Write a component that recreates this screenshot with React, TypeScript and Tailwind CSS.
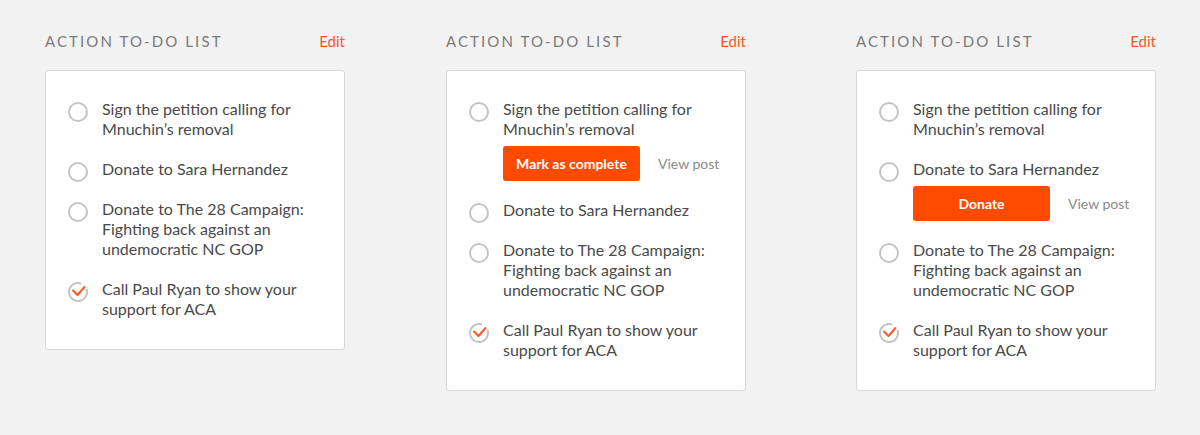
import type { ReactNode } from "react";

type Task = {
  label: ReactNode;
  done?: boolean;
};

const tasks: Task[] = [
  { label: <>Sign the petition calling for<br />Mnuchin’s removal</> },
  { label: "Donate to Sara Hernandez" },
  {
    label: (
      <>
        Donate to The 28 Campaign:
        <br />
        Fighting back against an
        <br />
        undemocratic NC GOP
      </>
    ),
  },
  { label: <>Call Paul Ryan to show your<br />support for ACA</>, done: true },
];

function Circle({ done }: { done?: boolean }) {
  if (done) {
    return (
      <svg width="20" height="20" viewBox="0 0 20 20" className="shrink-0 translate-y-[3px]">
        <path
          d="M18.46 6.92 A9 9 0 1 1 13.08 1.54"
          fill="none"
          stroke="#c4c4c4"
          strokeWidth="2"
        />
        <path
          d="M5 8.5 L9.5 13 L16.5 5"
          fill="none"
          stroke="#ff5722"
          strokeWidth="2"
          strokeLinecap="round"
          strokeLinejoin="round"
        />
      </svg>
    );
  }
  return (
    <svg width="20" height="20" viewBox="0 0 20 20" className="shrink-0 translate-y-[3px]">
      <circle cx="10" cy="10" r="9" fill="none" stroke="#c4c4c4" strokeWidth="2" />
    </svg>
  );
}

function TodoCard({ expanded }: { expanded?: { index: number; label: string } }) {
  return (
    <div className="w-[300px]">
      <div className="flex items-center justify-between h-[22px] mt-[30px]">
        <span className="text-[15px] tracking-[0.14em] text-[#7a7a7a]">ACTION TO-DO LIST</span>
        <span className="text-[15px] text-[#ff5722]">Edit</span>
      </div>
      <div className="mt-[18px] bg-white border border-[#d8d8d8] rounded-[3px] pl-[22px] pr-4 pt-[28px] pb-[30px] flex flex-col gap-5">
        {tasks.map((t, i) => (
          <div key={i}>
            <div className="flex items-start gap-[14px]">
              <Circle done={t.done} />
              <p className="text-[16px] leading-5 text-[#4a4a4a]">{t.label}</p>
            </div>
            {expanded && expanded.index === i && (
              <div className="flex items-center mt-[7px] mb-[-1px] ml-[34px]">
                <button className="w-[137px] h-[35px] rounded-[3px] bg-[#ff4a00] text-white text-[14px] font-bold">
                  {expanded.label}
                </button>
                <span className="ml-[18px] text-[14px] text-[#8a8a8a]">View post</span>
              </div>
            )}
          </div>
        ))}
      </div>
    </div>
  );
}

export default function App() {
  return (
    <div
      className="min-h-[435px] bg-[#f2f2f2] flex items-start pl-[45px]"
      style={{ fontFamily: "Lato, 'Noto Sans', sans-serif" }}
    >
      <TodoCard />
      <div className="ml-[101px]">
        <TodoCard expanded={{ index: 0, label: "Mark as complete" }} />
      </div>
      <div className="ml-[110px]">
        <TodoCard expanded={{ index: 1, label: "Donate" }} />
      </div>
    </div>
  );
}
